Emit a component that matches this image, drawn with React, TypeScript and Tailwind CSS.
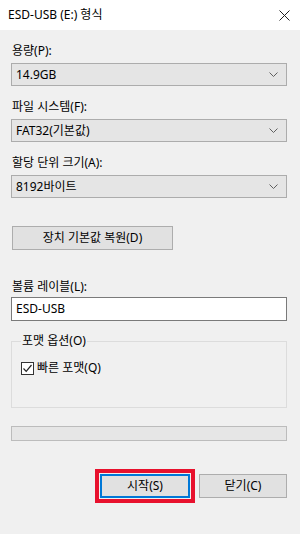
import { useState } from 'react'

const font = { fontFamily: '"Noto Sans", "Noto Sans CJK KR", sans-serif' }

const Chevron = () => (
  <svg width="9" height="5" viewBox="0 0 9 5" className="shrink-0">
    <path d="M0.5 0.5 L4.5 4.5 L8.5 0.5" fill="none" stroke="#606060" strokeWidth="1" />
  </svg>
)

const Select = ({ value }: { value: string }) => (
  <div className="h-[23px] flex items-center justify-between bg-[#e5e5e5] border border-[#acacac] pl-[4px] pr-[8px]">
    <span>{value}</span>
    <Chevron />
  </div>
)

const Label = ({ text, className = '' }: { text: string; className?: string }) => (
  <div className={`leading-[16px] pl-[1px] ${className}`}>{text}</div>
)

const App = () => {
  const [quick, setQuick] = useState(true)

  return (
    <div className="w-[300px] h-[534px] flex flex-col text-[12px] text-black" style={font}>
      {/* title bar */}
      <div className="h-[30px] shrink-0 bg-white flex items-center justify-between pl-[8px] pr-[10px]">
        <span className="leading-[16px]">ESD-USB (E:) 형식</span>
        <svg width="11" height="11" viewBox="0 0 11 11">
          <path d="M0.5 0.5 L10.5 10.5 M10.5 0.5 L0.5 10.5" stroke="#222" strokeWidth="1" />
        </svg>
      </div>

      {/* body */}
      <div className="flex-1 bg-[#f0f0f0] pl-[11px] pr-[13px] pt-[13px] flex flex-col">
        <Label text="용량(P):" className="mb-[4px]" />
        <Select value="14.9GB" />

        <Label text="파일 시스템(F):" className="mt-[13px] mb-[4px]" />
        <Select value="FAT32(기본값)" />

        <Label text="할당 단위 크기(A):" className="mt-[13px] mb-[4px]" />
        <Select value="8192바이트" />

        <button className="mt-[28px] ml-[1px] w-[161px] h-[24px] bg-[#e1e1e1] border border-[#adadad] leading-[16px]">
          장치 기본값 복원(D)
        </button>

        <Label text="볼륨 레이블(L):" className="mt-[29px] mb-[2px]" />
        <div className="h-[24px] bg-white border border-[#7a7a7a] flex items-center pl-[4px]">ESD-USB</div>

        <fieldset className="mt-[12px] border border-[#dcdcdc] px-[9px] pb-[31px]">
          <legend className="ml-[0px] px-[1px] leading-[16px]">포맷 옵션(O)</legend>
          <label className="mt-[11px] h-[16px] flex items-center gap-[3px] cursor-default">
            <span
              onClick={() => setQuick(!quick)}
              className="w-[13px] h-[13px] bg-white border border-[#333] flex items-center justify-center"
            >
              {quick && (
                <svg width="11" height="11" viewBox="0 0 11 11">
                  <path d="M1.5 5.5 L4.2 8.3 L9.5 2" fill="none" stroke="#222" strokeWidth="1.2" />
                </svg>
              )}
            </span>
            <span className="leading-[16px]">빠른 포맷(Q)</span>
          </label>
        </fieldset>

        <div className="mt-[18px] h-[15px] bg-[#e6e6e6] border border-[#bcbcbc]" />

        <div className="mt-[28px] flex items-center justify-end gap-[4px]">
          <div className="border-[4px] border-[#e8112d] p-[1px]">
            <button className="w-[90px] h-[24px] bg-[#e1e1e1] border-2 border-[#0078d7] leading-[16px]">
              시작(S)
            </button>
          </div>
          <button className="w-[88px] h-[24px] bg-[#e1e1e1] border border-[#adadad] leading-[16px]">
            닫기(C)
          </button>
        </div>
      </div>
    </div>
  )
}

export default App
